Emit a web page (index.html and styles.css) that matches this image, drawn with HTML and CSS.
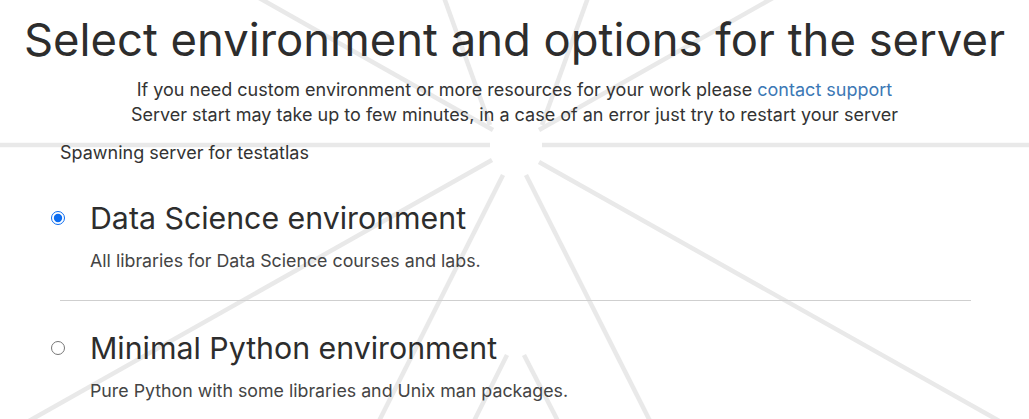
FILE: index.html
```html
<!DOCTYPE html>
<html lang="en">
<head>
<meta charset="utf-8">
<title>Spawner options</title>
<link rel="stylesheet" href="styles.css">
</head>
<body>
<svg class="rays" width="1029" height="419" viewBox="0 0 1029 419" aria-hidden="true">
  <g stroke="#e9e9e9" stroke-width="4.5" fill="none">
    <line x1="542" y1="145" x2="1040" y2="145"/>
    <line x1="490" y1="145" x2="-10" y2="145"/>
    <line x1="539" y1="130" x2="787" y2="-10"/>
    <line x1="493" y1="130" x2="245" y2="-10"/>
    <line x1="542" y1="125" x2="590" y2="-8"/>
    <line x1="490" y1="125" x2="442" y2="-8"/>
    <line x1="539" y1="162" x2="1010" y2="427"/>
    <line x1="492" y1="160" x2="20" y2="426"/>
    <line x1="526" y1="175" x2="653" y2="427"/>
    <line x1="503" y1="175" x2="376" y2="427"/>
    <line x1="507" y1="355" x2="471" y2="427"/>
    <line x1="524" y1="355" x2="561" y2="427"/>
  </g>
</svg>
<main class="page">
  <h1 class="title">Select environment and options for the server</h1>
  <p class="note">If you need custom environment or more resources for your work please <a href="#">contact support</a><br>Server start may take up to few minutes, in a case of an error just try to restart your server</p>
  <p class="spawning">Spawning server for testatlas</p>
  <form class="options">
    <label class="option">
      <input type="radio" name="env" checked>
      <span class="option-text">
        <span class="option-title">Data Science environment</span>
        <span class="option-desc">All libraries for Data Science courses and labs.</span>
      </span>
    </label>
    <hr class="sep">
    <label class="option">
      <input type="radio" name="env">
      <span class="option-text">
        <span class="option-title">Minimal Python environment</span>
        <span class="option-desc">Pure Python with some libraries and Unix man packages.</span>
      </span>
    </label>
  </form>
</main>
</body>
</html>
```

FILE: styles.css
```css
html, body {
  margin: 0;
  padding: 0;
  background: #fff;
  overflow: hidden;
}

body {
  font-family: Inter, "Noto Sans", sans-serif;
  color: #333;
  width: 1029px;
  height: 419px;
  position: relative;
}

.rays {
  position: absolute;
  left: 0;
  top: 0;
  z-index: 0;
}

.page {
  position: relative;
  z-index: 1;
  display: flex;
  flex-direction: column;
  align-items: stretch;
}

.title {
  margin: 12px 0 0;
  font-size: 45.4px;
  font-weight: 400;
  line-height: 56px;
  text-align: center;
  color: #2d2d2d;
}

.note {
  margin: 9px 0 0;
  font-size: 18px;
  line-height: 25px;
  text-align: center;
  color: #333;
}

.note a {
  color: #3c78b5;
  text-decoration: none;
}

.spawning {
  margin: 14px 0 0 60px;
  font-size: 18px;
  line-height: 24px;
  color: #333;
}

.options {
  display: flex;
  flex-direction: column;
  margin: 35px 58px 0 48px;
}

.option {
  display: flex;
  align-items: flex-start;
}

.option input {
  margin: 10.5px 0 0 2.5px;
  width: 14px;
  height: 14px;
  accent-color: #0b6cf0;
}

.option-text {
  display: flex;
  flex-direction: column;
  margin-left: 25.5px;
}

.option-title {
  font-size: 30.3px;
  line-height: 36px;
  color: #2d2d2d;
}

.option-desc {
  margin-top: 13px;
  font-size: 17.8px;
  line-height: 24px;
  color: #444;
}

.sep {
  margin: 27px 0 29px 12px;
  border: 0;
  border-top: 1px solid #cfcfcf;
  height: 0;
}
```
